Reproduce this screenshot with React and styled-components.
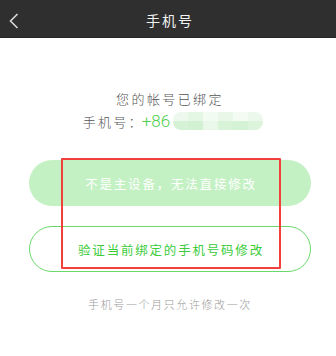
import React from "react";
import styled, { createGlobalStyle } from "styled-components";

const GlobalStyle = createGlobalStyle`
  body {
    margin: 0;
    background: #ffffff;
    font-family: "Noto Sans CJK SC", "Noto Sans", sans-serif;
  }
`;

const blurCells = [
  "#eef9ee", "#e4f6e4", "#f1fbf1", "#e8f7e8", "#f3fbf3", "#ebf8eb",
  "#d6f2d6", "#d2f1d2", "#eaf8ea", "#d9f3d9", "#d4f2d4", "#dcf4dc",
];

function App() {
  return (
    <Page>
      <GlobalStyle />
      <Header>
        <BackButton>
          <svg width="12" height="18" viewBox="0 0 12 18">
            <path d="M9.5 2 L2.5 9 L9.5 16" fill="none" stroke="#d8d8d8" strokeWidth="1.6" />
          </svg>
        </BackButton>
        <Title>手机号</Title>
      </Header>

      <Info>
        <InfoLine>您的帐号已绑定</InfoLine>
        <PhoneRow>
          <PhoneLabel>手机号：</PhoneLabel>
          <PhoneCode>+86</PhoneCode>
          <Masked>
            {blurCells.map((c, i) => (
              <Cell key={i} style={{ background: c }} />
            ))}
          </Masked>
        </PhoneRow>
      </Info>

      <Actions>
        <PillButton $variant="disabled">不是主设备，无法直接修改</PillButton>
        <PillButton $variant="outline">验证当前绑定的手机号码修改</PillButton>
        <Highlight />
      </Actions>

      <Note>手机号一个月只允许修改一次</Note>
    </Page>
  );
}

export default App;

const Page = styled.div`
  width: 336px;
  height: 356px;
  background: #ffffff;
  overflow: hidden;
`;

const Header = styled.div`
  height: 38px;
  background: #2f2f2f;
  border-bottom: 1px solid #262626;
  box-sizing: border-box;
  display: flex;
  align-items: center;
  justify-content: center;
  position: relative;
`;

const BackButton = styled.div`
  position: absolute;
  left: 8px;
  top: 11px;
  width: 12px;
  height: 18px;
`;

const Title = styled.div`
  color: #f2f2f2;
  font-size: 14px;
  letter-spacing: 2px;
  margin-left: 4px;
  margin-top: 2px;
`;

const Info = styled.div`
  margin-top: 52px;
  display: flex;
  flex-direction: column;
  align-items: center;
  padding-left: 4px;
  font-weight: 300;
`;

const InfoLine = styled.div`
  color: #555555;
  font-size: 13px;
  line-height: 18px;
  letter-spacing: 2.4px;
`;

const PhoneRow = styled.div`
  display: flex;
  align-items: center;
  height: 22px;
  margin-top: 2px;
  padding-left: 6px;
`;

const PhoneLabel = styled.span`
  color: #555555;
  font-size: 13px;
  letter-spacing: 2.2px;
`;

const PhoneCode = styled.span`
  color: #4ccf4c;
  font-family: Roboto, "Noto Sans", sans-serif;
  font-size: 17px;
  font-weight: 300;
  margin-left: -2px;
`;

const Masked = styled.div`
  display: grid;
  grid-template-columns: repeat(6, 1fr);
  grid-template-rows: repeat(2, 1fr);
  width: 90px;
  height: 18px;
  margin-left: 3px;
  border-radius: 8px;
  overflow: hidden;
  filter: blur(0.6px);
`;

const Cell = styled.div``;

const Actions = styled.div`
  position: relative;
  margin: 28px 0 0 29px;
  width: 282px;
  display: flex;
  flex-direction: column;
  gap: 20px;
`;

const PillButton = styled.div`
  height: 46px;
  border-radius: 23px;
  box-sizing: border-box;
  display: flex;
  align-items: center;
  justify-content: center;
  font-size: 12.5px;
  letter-spacing: 1.8px;
  font-weight: 400;
  background: ${(p) => (p.$variant === "disabled" ? "#c4f1c4" : "#ffffff")};
  color: ${(p) => (p.$variant === "disabled" ? "#ffffff" : "#3ccc3c")};
  border: ${(p) => (p.$variant === "disabled" ? "none" : "1px solid #6ad96a")};
  padding-left: 2px;
`;

const Highlight = styled.div`
  position: absolute;
  left: 32px;
  top: -2px;
  width: 220px;
  height: 111px;
  box-sizing: border-box;
  border: 2.5px solid #f2403a;
  border-radius: 1px;
`;

const Note = styled.div`
  margin-top: 24px;
  text-align: center;
  padding-left: 4px;
  color: #9a9a9a;
  font-size: 11px;
  font-weight: 300;
  letter-spacing: 1.6px;
`;
